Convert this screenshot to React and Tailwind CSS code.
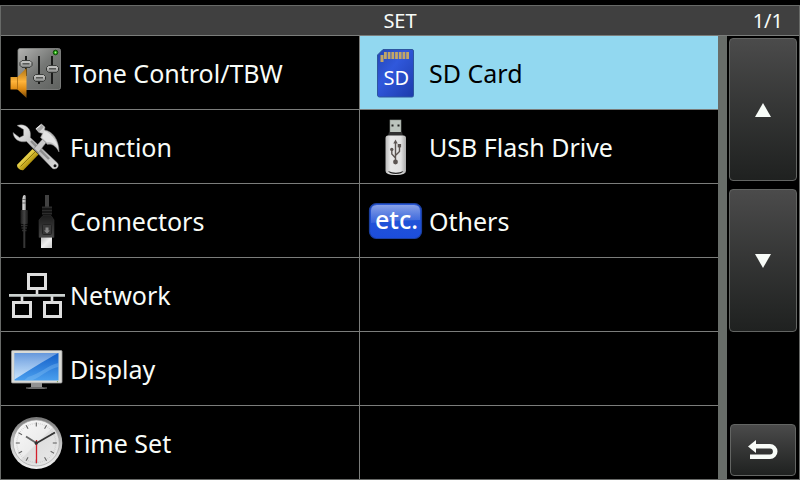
import React, { useState } from 'react'

function ToneIcon() {
  return (
    <svg viewBox="1 0 69 73" className="w-[69px] h-[73px] shrink-0" aria-hidden="true">
      <defs>
        <linearGradient id="tonePanel" x1="0" y1="0" x2="1" y2="1">
          <stop offset="0" stopColor="#b4b4b2" />
          <stop offset="0.5" stopColor="#757775" />
          <stop offset="1" stopColor="#5f625f" />
        </linearGradient>
        <linearGradient id="toneHorn" x1="0" y1="0" x2="0" y2="1">
          <stop offset="0" stopColor="#a86f12" />
          <stop offset="0.45" stopColor="#ffb43a" />
          <stop offset="0.7" stopColor="#e08c14" />
          <stop offset="1" stopColor="#704508" />
        </linearGradient>
        <linearGradient id="toneKnob" x1="0" y1="0" x2="0" y2="1">
          <stop offset="0" stopColor="#d5d5d3" />
          <stop offset="1" stopColor="#858785" />
        </linearGradient>
      </defs>
      <rect x="18" y="12.5" width="42.5" height="41" rx="2" fill="url(#tonePanel)" stroke="#8b8d8b" strokeWidth="0.8" />
      <path d="M26 20V40M39 20V48M52 20V48" stroke="#1a1b1a" strokeWidth="2" />
      {[[26, 28], [39.5, 42], [52.5, 33]].map(([x, y]) => (
        <g key={x}>
          <path d={`M${x - 4} ${y - 3.4}h8l2 2v2.8l-2 2h-8l-2-2v-2.8z`} fill="url(#toneKnob)" stroke="#333533" strokeWidth="1" />
          <rect x={x - 3.5} y={y - 0.9} width="7" height="1.4" fill="#4d4f4d" />
        </g>
      ))}
      <circle cx="55.5" cy="16.5" r="2.3" fill="#1b9a0c" stroke="#144d0c" />
      <circle cx="55.5" cy="16.5" r="0.9" fill="#a6ff8a" />
      <path d="M10.5 41H17.5L26.5 32V62L17.5 53.5H10.5Z" fill="url(#toneHorn)" />
      <path d="M17.5 41V53.5" stroke="#a66a10" strokeWidth="0.8" />
    </svg>
  )
}

function FunctionIcon() {
  return (
    <svg viewBox="1 0 69 73" className="w-[69px] h-[73px] shrink-0" aria-hidden="true">
      <defs>
        <linearGradient id="fnSteel" x1="0" y1="0" x2="1" y2="1">
          <stop offset="0" stopColor="#f4f4f4" />
          <stop offset="0.55" stopColor="#b4b4b4" />
          <stop offset="1" stopColor="#dedede" />
        </linearGradient>
        <linearGradient id="fnGrip" x1="0" y1="0" x2="1" y2="1">
          <stop offset="0" stopColor="#8d7708" />
          <stop offset="0.4" stopColor="#e6d04a" />
          <stop offset="0.6" stopColor="#b89a12" />
          <stop offset="1" stopColor="#6f5c04" />
        </linearGradient>
      </defs>
      {/* wrench */}
      <path
        d="M13 22.5L19.5 27.5L23.5 25.5L23.5 19.5L17 15.5C22 13.8 27 15.3 29.3 19.5C30.8 22.5 30.6 25 30.3 27.5L57.5 53C60 56 56.5 60.5 52.5 58.5L26.5 31.5C20 33 13.5 29.5 13 22.5Z"
        fill="url(#fnSteel)" stroke="#777" strokeWidth="0.5"
      />
      <path d="M31 31L49 49" stroke="#8d8d8d" strokeWidth="2.4" />
      <circle cx="55" cy="55.7" r="1.5" fill="#111" />
      {/* hammer */}
      <path d="M43.5 28L47 31.5L38.5 42.5L34 38.5Z" fill="#c9c9c9" stroke="#777" strokeWidth="0.5" />
      <path d="M32.5 39L38.5 44.5L23.5 60C20.5 61 16 57.5 17.3 54.5Z" fill="url(#fnGrip)" />
      <path d="M35 42L20.5 56.5" stroke="#776505" strokeWidth="0.8" />
      <path
        d="M36 18.5L41.5 14L45 17L44.5 20C52 21 59 29 59 42C56 36 52 33.5 47.5 34.5L40.5 27.5L42.5 23.5L39 22.5Z"
        fill="url(#fnSteel)" stroke="#888" strokeWidth="0.5"
      />
      <path d="M44 21C50 22.5 56 29 57.8 37C53.5 32.5 50 31.5 47 32.5L42 27.5Z" fill="#e4e4e4" />
      <path d="M35.5 19L41 14.2L44 17L38.8 22.5Z" fill="#a9a9a9" />
      <path d="M36.3 18.8L40.6 15.2" stroke="#fff" strokeWidth="1" />
    </svg>
  )
}

function ConnectorsIcon() {
  return (
    <svg viewBox="1 0 69 73" className="w-[69px] h-[73px] shrink-0" aria-hidden="true">
      <defs>
        <linearGradient id="cnPin" x1="0" y1="0" x2="1" y2="0">
          <stop offset="0" stopColor="#777" />
          <stop offset="0.45" stopColor="#e2e2e2" />
          <stop offset="1" stopColor="#666" />
        </linearGradient>
        <linearGradient id="cnBody" x1="0" y1="0" x2="1" y2="0">
          <stop offset="0" stopColor="#1b1b1b" />
          <stop offset="0.5" stopColor="#454545" />
          <stop offset="1" stopColor="#171717" />
        </linearGradient>
        <linearGradient id="cnUsb" x1="0" y1="0" x2="0" y2="1">
          <stop offset="0" stopColor="#1c1c1c" />
          <stop offset="1" stopColor="#484848" />
        </linearGradient>
        <linearGradient id="cnTip" x1="0" y1="0" x2="1" y2="1">
          <stop offset="0" stopColor="#bcbcbc" />
          <stop offset="0.5" stopColor="#f0f0f0" />
          <stop offset="1" stopColor="#c8c8c8" />
        </linearGradient>
      </defs>
      <path d="M23 12L24 11H25L26 12V26H22V15Z" fill="url(#cnPin)" />
      <path d="M22 15.5H26M22 19H26" stroke="#555" strokeWidth="0.8" />
      <rect x="20.5" y="26" width="7.5" height="14" rx="1" fill="url(#cnBody)" />
      <path d="M21 41.5H27.5M21.5 44H27M22 46.5H26.5" stroke="#2d2d2d" strokeWidth="1.6" />
      <path d="M24.3 40V64" stroke="#363636" strokeWidth="2" />
      <path d="M47 11V23" stroke="#414141" strokeWidth="4" />
      <path d="M42 23.5H52M42 26.5H52M42 29.5H52" stroke="#2c2c2c" strokeWidth="1.8" />
      <path d="M43 31.5H51L54 36V53.5H39V36Z" fill="url(#cnUsb)" stroke="#333" strokeWidth="0.6" />
      <rect x="42.5" y="40.5" width="9" height="10" rx="1" fill="#383838" stroke="#222" />
      <path d="M45.5 43.5H48.5V46.5H50L47 49.5L44 46.5H45.5Z" fill="#858585" />
      <rect x="41" y="53.5" width="11" height="10.5" fill="url(#cnTip)" />
    </svg>
  )
}

function NetworkIcon() {
  return (
    <svg viewBox="1 0 69 73" className="w-[69px] h-[73px] shrink-0" aria-hidden="true">
      <g fill="none" stroke="#dfdfdf">
        <rect x="28.5" y="16.5" width="17" height="14" strokeWidth="3" />
        <rect x="13.5" y="44.5" width="17" height="14" strokeWidth="3" />
        <rect x="44.5" y="44.5" width="16" height="14" strokeWidth="3" />
        <path d="M37 32V36M22 38V43M52 38V43" strokeWidth="2.6" />
        <path d="M9 37.3H65" stroke="#ccd2d0" strokeWidth="2.8" />
      </g>
    </svg>
  )
}

function DisplayIcon() {
  return (
    <svg viewBox="1 0 69 73" className="w-[69px] h-[73px] shrink-0" aria-hidden="true">
      <defs>
        <linearGradient id="dpScreen" x1="0" y1="0" x2="0" y2="1">
          <stop offset="0" stopColor="#145fc8" />
          <stop offset="1" stopColor="#4a9fee" />
        </linearGradient>
        <linearGradient id="dpShine" x1="0" y1="0" x2="0" y2="1">
          <stop offset="0" stopColor="#fff" stopOpacity="0.35" />
          <stop offset="1" stopColor="#fff" stopOpacity="0.7" />
        </linearGradient>
      </defs>
      <path d="M31 51H42V55L46 57H27L31 55Z" fill="#929292" />
      <path d="M26 56H47" stroke="#5e5e5e" strokeWidth="1.4" />
      <rect x="11.5" y="18.5" width="50.5" height="32.5" rx="1" fill="#d9dad6" stroke="#999" strokeWidth="0.8" />
      <rect x="14.5" y="21" width="44" height="27.5" fill="url(#dpScreen)" />
      <path d="M28 45C40 42 48 33 58.5 31V35C50 36 42 44 32 48.5H24Z" fill="#8cc5f7" opacity="0.35" />
      <path d="M14.5 21H58.5C45 28 28 39 14.5 47.5Z" fill="url(#dpShine)" />
      <circle cx="57.5" cy="49.7" r="0.6" fill="#7ba04b" />
    </svg>
  )
}

function ClockIcon() {
  const ticks = Array.from({ length: 12 }, (_, i) => i * 30)
  const minutes = Array.from({ length: 60 }, (_, i) => i * 6)
  return (
    <svg viewBox="1 0 69 73" className="w-[69px] h-[73px] shrink-0" aria-hidden="true">
      <defs>
        <linearGradient id="ckRim" x1="0" y1="0" x2="0" y2="1">
          <stop offset="0" stopColor="#777" />
          <stop offset="0.5" stopColor="#c2c2c2" />
          <stop offset="1" stopColor="#f2f2f2" />
        </linearGradient>
        <linearGradient id="ckFace" x1="0" y1="0" x2="1" y2="1">
          <stop offset="0" stopColor="#fafafa" />
          <stop offset="0.5" stopColor="#ececec" />
          <stop offset="0.52" stopColor="#dedede" />
          <stop offset="1" stopColor="#eaeaea" />
        </linearGradient>
      </defs>
      <circle cx="36.3" cy="37" r="26" fill="url(#ckRim)" />
      <circle cx="36.3" cy="37" r="23" fill="url(#ckFace)" stroke="#9c9c9c" strokeWidth="0.6" />
      {minutes.map(a => (
        <path key={a} d="M36.3 16.8V18.2" stroke="#bbb" strokeWidth="0.5" transform={`rotate(${a} 36.3 37)`} />
      ))}
      {ticks.map(a => (
        <path key={a} d="M36.3 16.5V20.5" stroke="#666" strokeWidth="1.1" transform={`rotate(${a} 36.3 37)`} />
      ))}
      <path d="M26 30.5L36.3 37" stroke="#666" strokeWidth="1.8" />
      <path d="M35 38L55 26.5" stroke="#333" strokeWidth="1.6" />
      <path d="M36.5 34V57" stroke="#d3202c" strokeWidth="1.3" />
      <circle cx="36.3" cy="37" r="1.7" fill="#333" />
    </svg>
  )
}

function SdIcon() {
  return (
    <svg viewBox="0 0 69 73" className="w-[69px] h-[73px] shrink-0" aria-hidden="true">
      <defs>
        <linearGradient id="sdBody" x1="0" y1="0" x2="1" y2="1">
          <stop offset="0" stopColor="#2446b4" />
          <stop offset="0.4" stopColor="#3058dc" />
          <stop offset="1" stopColor="#1d3bab" />
        </linearGradient>
      </defs>
      <path d="M23 13.5H52Q53.5 13.5 53.5 15V59.5Q53.5 61 52 61H19.5Q17.5 61 17.5 59V19Z" fill="url(#sdBody)" stroke="#2d569f" strokeWidth="1" />
      <rect x="20.5" y="19" width="3" height="7" fill="#c2a667" />
      {[24, 27.7, 31.4, 35.1, 38.8, 42.5, 46.2].map(x => (
        <rect key={x} x={x} y="16" width="2.8" height="7" fill="#c2a667" />
      ))}
      <text x="36.3" y="49" textAnchor="middle" fontFamily="Noto Sans, sans-serif" fontSize="20" fill="#fff">SD</text>
    </svg>
  )
}

function UsbIcon() {
  return (
    <svg viewBox="0 0 69 73" className="w-[69px] h-[73px] shrink-0" aria-hidden="true">
      <defs>
        <linearGradient id="usBody" x1="0" y1="0" x2="1" y2="0">
          <stop offset="0" stopColor="#b9b9b9" />
          <stop offset="0.25" stopColor="#e8e8e8" />
          <stop offset="0.75" stopColor="#e2e2e2" />
          <stop offset="1" stopColor="#aaa" />
        </linearGradient>
      </defs>
      <rect x="30" y="10" width="11" height="12.5" fill="#bcc4bd" stroke="#8c948e" strokeWidth="0.6" />
      <rect x="31.5" y="14.5" width="2" height="2" fill="#222" />
      <rect x="37.5" y="14.5" width="2" height="2" fill="#222" />
      <path d="M29 22H42L43 26H28Z" fill="#303030" />
      <path d="M25.5 28Q25.5 25.5 28 25.5H43.5Q46 25.5 46 28V61Q46 65 35.8 65Q25.5 65 25.5 61Z" fill="url(#usBody)" />
      <path d="M28 61Q36 64.5 43.5 61Q42 64 35.8 64Q29.5 64 28 61Z" fill="#222" />
      <g stroke="#5c5552" fill="none" strokeWidth="1.4">
        <path d="M35.5 51V32M35.5 48L31.8 44V39M35.5 45.5L39.5 41.5V36" />
      </g>
      <path d="M35.5 29.5L37.7 33.5H33.3Z" fill="#5c5552" />
      <circle cx="35.5" cy="52" r="2.4" fill="#5c5552" />
      <circle cx="31.8" cy="39.4" r="1.7" fill="#5c5552" />
      <rect x="37.7" y="34" width="3.4" height="3.4" fill="#5c5552" />
    </svg>
  )
}

function EtcIcon() {
  return (
    <svg viewBox="0 0 69 73" className="w-[69px] h-[73px] shrink-0" aria-hidden="true">
      <defs>
        <linearGradient id="etcBody" x1="0" y1="0" x2="0" y2="1">
          <stop offset="0" stopColor="#2c59d2" />
          <stop offset="0.5" stopColor="#2153d8" />
          <stop offset="1" stopColor="#1c4ddb" />
        </linearGradient>
        <linearGradient id="etcShine" x1="0" y1="0" x2="0" y2="1">
          <stop offset="0" stopColor="#aabcf0" stopOpacity="0.75" />
          <stop offset="1" stopColor="#7c9aea" stopOpacity="0.25" />
        </linearGradient>
      </defs>
      <rect x="9.5" y="19.5" width="52" height="35" rx="7" fill="url(#etcBody)" stroke="#1b3f9f" strokeWidth="1.2" />
      <path d="M11 27Q11 21 17 21H54Q60 21 60 27V36Q36 36 11 39Z" fill="url(#etcShine)" />
      <text x="36.5" y="44.5" textAnchor="middle" fontFamily="Noto Sans, sans-serif" fontSize="25" fontWeight="500" fill="#fff">etc.</text>
    </svg>
  )
}

const ITEMS = [
  { name: 'Tone Control/TBW', Icon: ToneIcon },
  { name: 'SD Card', Icon: SdIcon },
  { name: 'Function', Icon: FunctionIcon },
  { name: 'USB Flash Drive', Icon: UsbIcon },
  { name: 'Connectors', Icon: ConnectorsIcon },
  { name: 'Others', Icon: EtcIcon },
  { name: 'Network', Icon: NetworkIcon },
  null,
  { name: 'Display', Icon: DisplayIcon },
  null,
  { name: 'Time Set', Icon: ClockIcon },
  null,
]

const keyCls = "flex items-center justify-center border border-[#636563] rounded-sm bg-linear-to-b from-[#4b4b4b] to-[#1f2120] text-[#f8fcf8]"

export default function App() {
  const [selected, setSelected] = useState('SD Card')

  return (
    <div className="min-h-screen flex flex-col bg-black pt-[5px] font-['Noto_Sans',sans-serif] text-[#f8fcf8]">
      <main className="flex-1 flex flex-col border border-[#686a68]">
        {/* Title bar */}
        <header className="grid grid-cols-3 items-center h-[30px] px-4 bg-[#404040] border-b border-[#7b7d7b] text-xl leading-7">
          <h1 className="col-start-2 text-center">SET</h1>
          <p className="text-right">1/1</p>
        </header>

        <div className="flex-1 flex">
          {/* Menu items */}
          <div className="flex-1 grid grid-cols-2 auto-rows-fr gap-px bg-[#7b7d7b]">
            {ITEMS.map((item, i) => item ? (
              <button key={item.name} onClick={() => setSelected(item.name)}
                className={`flex items-center text-left text-[25px] leading-8 ${
                  selected === item.name ? 'bg-[#92d8f0] text-black' : 'bg-black'
                }`}>
                <item.Icon />
                <span>{item.name}</span>
              </button>
            ) : (
              <div key={i} className="bg-black" />
            ))}
          </div>

          <div className="w-[9px] bg-[#686d69]" />

          {/* Page keys */}
          <nav className="w-[72px] flex flex-col gap-2 px-[2px] pt-[2px] pb-[3px]">
            <button aria-label="Previous page" className={`${keyCls} h-[143px]`}>
              <svg viewBox="0 0 16 14" className="w-4 h-[14px]"><path d="M8 0L16 14H0Z" fill="currentColor" /></svg>
            </button>
            <button aria-label="Next page" className={`${keyCls} h-[143px]`}>
              <svg viewBox="0 0 16 14" className="w-4 h-[14px]"><path d="M0 0H16L8 14Z" fill="currentColor" /></svg>
            </button>
            <button aria-label="Back" className={`${keyCls} h-[52px] mt-auto mx-px`}>
              <svg viewBox="0 0 30 20" className="w-[30px] h-5">
                <path d="M5 6.3H22a5.2 5.2 0 0 1 0 10.4H2" fill="none" stroke="currentColor" strokeWidth="4.6" />
                <path d="M0 6.5L8 0V13Z" fill="currentColor" />
              </svg>
            </button>
          </nav>
        </div>
      </main>
    </div>
  )
}
